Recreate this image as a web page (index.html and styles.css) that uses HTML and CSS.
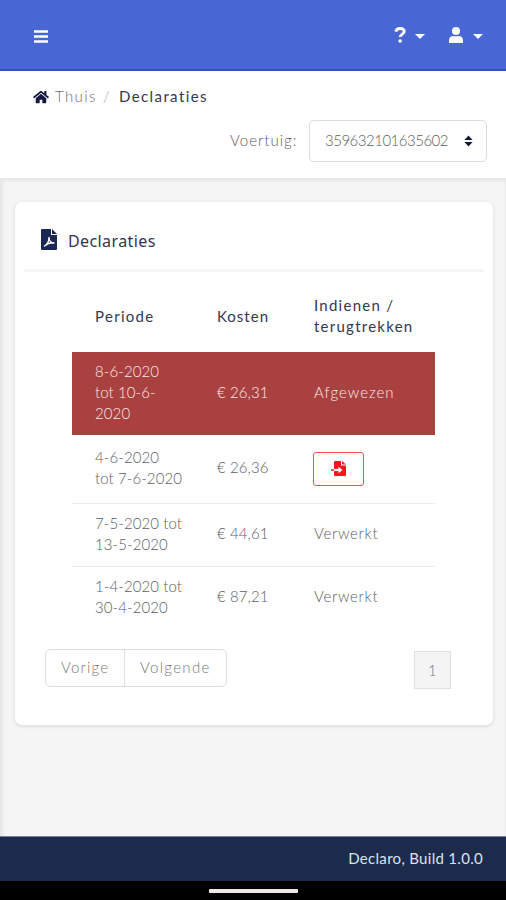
FILE: index.html
```html
<!DOCTYPE html>
<html lang="nl">
<head>
<meta charset="utf-8">
<title>Declaraties</title>
<link rel="stylesheet" href="styles.css">
</head>
<body>
<header class="topbar">
  <svg class="menu" viewBox="0 0 14 13"><path d="M0 1.5h14M0 6.5h14M0 11.5h14" stroke="#fff" stroke-width="2.4"/></svg>
  <nav class="actions">
    <svg class="help" viewBox="0 0 12 16"><path d="M1.800 4.600C2.200 2.600 3.800 1.500 6 1.500c2.500 0 4.200 1.200 4.200 3.100 0 2.700-4 2.400-4 5.500" fill="none" stroke="#fff" stroke-width="2.900"/><circle cx="6.100" cy="14" r="1.800" fill="#fff"/></svg>
    <i class="caret"></i>
    <svg class="user" viewBox="0 0 14 16"><circle cx="7" cy="4" r="4" fill="#fff"/><path d="M0 16v-2.600C0 10.800 1.700 9 4 9c1 .5 5 .5 6 0 2.300 0 4 1.800 4 4.400V16z" fill="#fff"/></svg>
    <i class="caret"></i>
  </nav>
</header>
<section class="subhead">
  <div class="crumbs">
    <svg class="home" viewBox="0 0 576 512"><path fill="#15183f" d="M280 148 96 300v164a16 16 0 0 0 16 16h112a16 16 0 0 0 16-16v-96a16 16 0 0 1 16-16h64a16 16 0 0 1 16 16v96a16 16 0 0 0 16 16h112a16 16 0 0 0 16-16V300L296 148a12 12 0 0 0-16 0zM572 251l-84-69V44a12 12 0 0 0-12-12h-56a12 12 0 0 0-12 12v73l-90-74a48 48 0 0 0-61 0L4 251a12 12 0 0 0-1 17l25 31a12 12 0 0 0 17 2L280 107a12 12 0 0 1 16 0l235 194a12 12 0 0 0 17-2l26-31a12 12 0 0 0-2-17z"/></svg>
    <span class="thuis">Thuis</span><span class="slash">/</span><span class="current">Declaraties</span>
  </div>
  <div class="vehicle">
    <span class="label">Voertuig:</span>
    <div class="select"><span class="number">359632101635602</span><svg class="sort" viewBox="0 0 10 12"><path d="M5 0l4.600 5H.4zM5 12l4.600-5H.4z" fill="#15183f"/></svg></div>
  </div>
</section>
<main>
  <section class="card">
    <h1><svg class="pdf" viewBox="0 0 16 21"><path fill="#1a2752" d="M1 0h9v6h6v14a1 1 0 0 1-1 1H1a1 1 0 0 1-1-1V1a1 1 0 0 1 1-1zM11 0l5 5h-5z"/><path d="M3.500 17c2.500-1.500 4.500-5 4.500-8.500 0 3.500 2.500 6 5 5.500-3-.8-6 .3-9.500 3z" fill="none" stroke="#fff" stroke-width="1.400" stroke-linejoin="round"/></svg><span>Declaraties</span></h1>
    <table>
      <thead><tr><th class="c1"><span class="periode">Periode</span></th><th class="c2"><span class="kosten">Kosten</span></th><th class="c3"><span class="indienen">Indienen /</span><br><span class="terug">terugtrekken</span></th></tr></thead>
      <tbody>
        <tr class="rejected"><td>8-6-2020<br>tot 10-6-<br>2020</td><td>€ 26,31</td><td class="state">Afgewezen</td></tr>
        <tr class="open"><td>4-6-2020<br>tot 7-6-2020</td><td>€ 26,36</td><td><button class="submit"><svg viewBox="0 0 16 15"><path d="M4 0h6v4.500h5V14a1 1 0 0 1-1 1H4a1 1 0 0 1-1-1V1a1 1 0 0 1 1-1zM11 0l4 3.600h-4z" fill="#fa1420"/><path d="M3 9h5.500" stroke="#fff" stroke-width="2.200"/><path d="M7.500 5.800 11.500 9l-4 3.200z" fill="#fff"/><path d="M0 9h3" stroke="#fa1420" stroke-width="1.500"/></svg></button></td></tr>
        <tr class="done"><td>7-5-2020 tot<br>13-5-2020</td><td>€ 44,61</td><td class="state">Verwerkt</td></tr>
        <tr class="done"><td>1-4-2020 tot<br>30-4-2020</td><td>€ 87,21</td><td class="state">Verwerkt</td></tr>
      </tbody>
    </table>
    <div class="pager">
      <div class="group"><span class="prev">Vorige</span><span class="next">Volgende</span></div>
      <span class="page">1</span>
    </div>
  </section>
</main>
<footer>Declaro, Build 1.0.0</footer>
<div class="system"><i></i></div>
</body>
</html>
```
FILE: styles.css
```css
* { box-sizing: border-box; }
body { margin: 0; height: 900px; display: flex; flex-direction: column; overflow: hidden; background: #f5f5f5; color: #5c5e68; font: 300 15px/21px Lato, sans-serif; letter-spacing: .1px; }
svg { display: block; flex: none; }
.topbar { height: 71px; flex: none; background: #4867d4; border-bottom: 2px solid #2f50c4; display: flex; justify-content: space-between; padding: 0 23px 0 34px; }
.menu { width: 14px; height: 13px; margin-top: 30px; }
.actions { display: flex; }
.help { width: 12px; height: 16px; margin: 27px 9px 0 0; }
.user { width: 14px; height: 16px; margin: 27px 10px 0 24px; }
.caret { width: 10px; height: 5px; margin-top: 34px; background: #fff; clip-path: polygon(0 0, 100% 0, 50% 100%); }
.subhead { height: 107px; flex: none; background: #fff; padding: 15px 19px 0 33px; }
.crumbs { display: flex; height: 21px; }
.home { width: 16px; height: 14px; margin: 4px 6px 0 0; }
.thuis { width: 48px; color: #6c6c74; letter-spacing: 1.400px; }
.slash { width: 16px; color: #a5a6ab; }
.current { color: #353750; font-weight: 400; letter-spacing: 1.400px; }
.vehicle { display: flex; justify-content: flex-end; margin-top: 13px; }
.label { width: 79px; padding-top: 10px; letter-spacing: 1px; }
.select { width: 178px; height: 42px; border: 1px solid #dcdcdf; border-radius: 5px; display: flex; justify-content: space-between; align-items: center; padding: 0 13px 2px 15px; }
.number { letter-spacing: -.5px; }
.sort { width: 9px; height: 12px; margin-top: 2px; }
main { flex: 1; padding: 24px 13px 0 15px; box-shadow: inset 3px 3px 3px #e7e7e8, inset -1px 0 1px #e9e9e9; }
.card { height: 523px; background: #fff; border-radius: 7px; box-shadow: 0 1px 3px 1px #e2e2e3; padding: 0 9px; }
h1 { height: 70px; margin: 0; border-bottom: 3px solid #f6f6f6; display: flex; padding: 27px 0 0 17px; color: #303550; font: 400 16px/24px "Noto Sans", sans-serif; letter-spacing: .4px; }
.pdf { width: 16px; height: 21px; margin-right: 11px; }
table { width: 363px; margin: 9px 0 0 48px; border-collapse: collapse; table-layout: fixed; }
th, td { padding: 0 0 2px 22px; text-align: left; vertical-align: middle; font-weight: inherit; white-space: nowrap; }
th { height: 71px; color: #34374f; font-weight: 400; padding: 0 0 1px 23px; }
.c1 { width: 122px; }
.c2 { width: 97px; }
.periode { letter-spacing: 1.300px; }
.kosten { letter-spacing: 1px; }
.indienen, .terug { letter-spacing: 1.250px; }
td { padding-left: 23px; }
.rejected { height: 83px; background: #a94141; color: #ffe9e5; }
.open { height: 68px; border-bottom: 1px solid #ebebed; }
.done { height: 63px; border-bottom: 1px solid #ebebed; }
.done:last-child { border: 0; }
.state { letter-spacing: 1px; }
.done .state { letter-spacing: .7px; }
.submit { display: flex; justify-content: center; align-items: center; width: 51px; height: 34px; margin: 2px 0 0 -1px; padding: 0; background: #fff; border: 1px solid #f54f51; border-radius: 3px; }
.submit svg { width: 16px; height: 15px; margin-top: -1px; }
.pager { display: flex; justify-content: space-between; margin-top: 20px; padding: 0 33px 0 21px; color: #77777b; }
.group { display: flex; height: 38px; border: 1px solid #dedede; border-radius: 5px; line-height: 35px; }
.prev { width: 79px; padding-left: 15px; border-right: 1px solid #dedede; letter-spacing: 1.200px; }
.next { width: 101px; padding-left: 15px; letter-spacing: 1.300px; }
.page { width: 37px; height: 38px; margin-top: 2px; border: 1px solid #e0e0e0; background: #f4f4f4; text-align: center; line-height: 36px; }
footer { height: 45px; flex: none; background: #1c2b4c; border-top: 1px solid #71839b; color: #dce1e9; text-align: right; font-weight: 400; line-height: 42px; padding-right: 23px; letter-spacing: .3px; }
.system { height: 19px; flex: none; background: #000; display: flex; justify-content: center; padding: 8px 0 0 1px; }
.system i { width: 89px; height: 4px; border-radius: 1px; background: #eee9e7; }
```
